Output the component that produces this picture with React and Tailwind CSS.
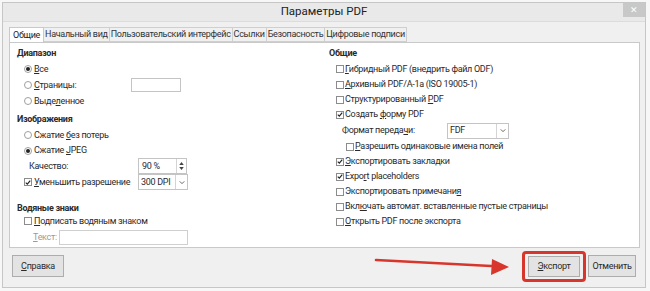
import React from "react";

const Radio = ({ checked }) => (
  <span className="w-[8px] h-[8px] rounded-full border border-[#a0a0a0] bg-white flex items-center justify-center shrink-0">
    {checked && <span className="w-[4px] h-[4px] rounded-full bg-[#222]" />}
  </span>
);

const Check = ({ checked }) => (
  <span className="w-[8px] h-[8px] border border-[#8c8c8c] bg-white flex items-center justify-center shrink-0">
    {checked && (
      <svg viewBox="0 0 8 8" className="w-[7px] h-[7px]">
        <path d="M1 4.2 L3.1 6.3 L7 1.4" stroke="#222" strokeWidth="1.5" fill="none" />
      </svg>
    )}
  </span>
);

const Chevron = () => (
  <svg viewBox="0 0 8 6" className="w-[6px] h-[5px]">
    <path d="M1 1.5 L4 4.5 L7 1.5" stroke="#555" strokeWidth="1.2" fill="none" />
  </svg>
);

const Tab = ({ label, active }) => (
  <div
    className={
      active
        ? "h-[16px] -mb-px px-[3px] flex items-center bg-white border border-b-0 border-[#c9c9c9] text-[#222]"
        : "h-[15px] px-[1px] flex items-center bg-[#f0f0f0] border border-l-0 border-[#cfcfcf] text-[#333]"
    }
  >
    {label}
  </div>
);

export default function App() {
  return (
    <div className="w-[650px] h-[291px] bg-[#f7f7f7] relative overflow-hidden font-['Roboto',sans-serif] text-[9px] tracking-[-0.3px] leading-none text-[#2a2a2a] whitespace-nowrap">
      <div className="ml-[2px] mt-[2px] w-[644px] h-[286px] border border-[#c6c6c6] bg-[#f0f0f0] flex flex-col">
        {/* title bar */}
        <div className="relative h-[19px] bg-[#e9e9e9] border-b border-[#dcdcdc] flex items-center justify-center">
          <span className="text-[11.5px] tracking-normal text-[#222]">Параметры PDF</span>
          <div className="absolute right-0 top-0 w-[22px] h-[14px] bg-[#c8c8c8] flex items-center justify-center text-white text-[9px]">
            ✕
          </div>
        </div>

        {/* tabs */}
        <div className="flex items-end pl-[6px] mt-[4px] h-[16px]">
          <Tab label="Общие" active />
          <Tab label="Начальный вид" />
          <Tab label="Пользовательский интерфейс" />
          <Tab label="Ссылки" />
          <Tab label="Безопасность" />
          <Tab label="Цифровые подписи" />
        </div>

        {/* panel */}
        <div className="ml-[6px] w-[631px] h-[206px] bg-white border border-[#c9c9c9] flex pt-[3px]">
          <div className="w-[319px] pl-[7px] flex flex-col">
            <div className="h-[15px] flex items-center font-bold">Диапазон</div>
            <div className="h-[16px] flex items-center pl-[7px] gap-[2px]">
              <Radio checked />
              <span><u>В</u>се</span>
            </div>
            <div className="h-[16px] flex items-center pl-[7px]">
              <div className="w-[107px] flex items-center gap-[2px]">
                <Radio />
                <span><u>С</u>траницы:</span>
              </div>
              <div className="w-[50px] h-[14px] border border-[#c4c4c4] bg-white" />
            </div>
            <div className="h-[16px] flex items-center pl-[7px] gap-[2px]">
              <Radio />
              <span>Выде<u>л</u>енное</span>
            </div>
            <div className="h-[18px] pt-[2px] flex items-center font-bold">Изображения</div>
            <div className="h-[16px] flex items-center pl-[7px] gap-[2px]">
              <Radio />
              <span>Сжатие <u>б</u>ез потерь</span>
            </div>
            <div className="h-[15px] flex items-center pl-[7px] gap-[2px]">
              <Radio checked />
              <span>Сжатие <u>J</u>PEG</span>
            </div>
            <div className="h-[16px] flex items-center pl-[12px]">
              <span className="w-[109px]">Качество:</span>
              <div className="w-[49px] h-[16px] border border-[#c4c4c4] bg-white flex items-center">
                <span className="flex-1 pl-[3px]">90 %</span>
                <div className="w-[10px] h-full border-l border-[#d4d4d4] flex flex-col items-center justify-center gap-[2px]">
                  <svg viewBox="0 0 6 4" className="w-[5px] h-[3px]"><path d="M0 4 L3 0 L6 4 Z" fill="#444" /></svg>
                  <svg viewBox="0 0 6 4" className="w-[5px] h-[3px]"><path d="M0 0 L3 4 L6 0 Z" fill="#444" /></svg>
                </div>
              </div>
            </div>
            <div className="h-[16px] flex items-center pl-[7px]">
              <div className="w-[114px] flex items-center gap-[2px]">
                <Check checked />
                <span><u>У</u>меньшить разрешение</span>
              </div>
              <div className="w-[50px] h-[16px] border border-[#c4c4c4] bg-white flex items-center">
                <span className="flex-1 pl-[2px]">300 DPI</span>
                <div className="w-[12px] h-full border-l border-[#d4d4d4] flex items-center justify-center">
                  <Chevron />
                </div>
              </div>
            </div>
            <div className="h-[24px] pb-[1px] flex items-end font-bold">Водяные знаки</div>
            <div className="h-[14px] flex items-center pl-[7px] gap-[2px]">
              <Check />
              <span><u>П</u>одписать водяным знаком</span>
            </div>
            <div className="h-[18px] flex items-center pl-[16px]">
              <span className="w-[26px] text-[#9a9a9a]"><u>Т</u>екст:</span>
              <div className="w-[129px] h-[15px] border border-[#cfcfcf] bg-white" />
            </div>
          </div>

          <div className="flex-1 flex flex-col">
            <div className="h-[15px] flex items-center font-bold">Общие</div>
            <div className="h-[16px] flex items-center pl-[7px] gap-[1px]">
              <Check />
              <span><u>Г</u>ибридный PDF (внедрить файл ODF)</span>
            </div>
            <div className="h-[15px] flex items-center pl-[7px] gap-[1px]">
              <Check />
              <span><u>А</u>рхивный PDF/A-1a (ISO 19005-1)</span>
            </div>
            <div className="h-[15px] flex items-center pl-[7px] gap-[1px]">
              <Check />
              <span>Структурированный <u>P</u>DF</span>
            </div>
            <div className="h-[15px] flex items-center pl-[7px] gap-[1px]">
              <Check checked />
              <span>Создать <u>ф</u>орму PDF</span>
            </div>
            <div className="h-[17px] flex items-center pl-[13px]">
              <span className="w-[105px]">Формат переда<u>ч</u>и:</span>
              <div className="w-[62px] h-[16px] border border-[#c4c4c4] bg-white flex items-center">
                <span className="flex-1 pl-[2px]">FDF</span>
                <div className="w-[12px] h-full border-l border-[#d4d4d4] flex items-center justify-center">
                  <Chevron />
                </div>
              </div>
            </div>
            <div className="h-[15px] flex items-center pl-[17px] gap-[1px]">
              <Check />
              <span><u>Р</u>азрешить одинаковые имена полей</span>
            </div>
            <div className="h-[15px] flex items-center pl-[7px] gap-[1px]">
              <Check checked />
              <span><u>Э</u>кспортировать закладки</span>
            </div>
            <div className="h-[15px] flex items-center pl-[7px] gap-[1px]">
              <Check checked />
              <span>Expo<u>r</u>t placeholders</span>
            </div>
            <div className="h-[15px] flex items-center pl-[7px] gap-[1px]">
              <Check />
              <span>Экспортировать примечани<u>я</u></span>
            </div>
            <div className="h-[15px] flex items-center pl-[7px] gap-[1px]">
              <Check />
              <span>Вкл<u>ю</u>чать автомат. вставленные пустые страницы</span>
            </div>
            <div className="h-[15px] flex items-center pl-[7px] gap-[1px]">
              <Check />
              <span><u>О</u>ткрыть PDF после экспорта</span>
            </div>
          </div>
        </div>

        {/* buttons */}
        <div className="flex-1 flex items-center px-[9px] pb-[3px]">
          <button className="w-[52px] h-[22px] border border-[#adadad] bg-[#e3e3e3] flex items-center justify-center">
            <span><u>С</u>правка</span>
          </button>
          <div className="flex-1" />
          <div className="border-[3px] border-[#d8362d] rounded-[4px] px-[3px] py-[2px]">
            <button className="w-[52px] h-[21px] border border-[#adadad] bg-[#e3e3e3] flex items-center justify-center">
              <span><u>Э</u>кспорт</span>
            </button>
          </div>
          <button className="ml-[2px] w-[48px] h-[22px] border border-[#adadad] bg-[#e3e3e3] flex items-center justify-center">
            Отменить
          </button>
        </div>
      </div>

      {/* annotation arrow */}
      <svg className="absolute left-0 top-0 pointer-events-none" width="650" height="291">
        <line x1="376" y1="260" x2="496" y2="266.2" stroke="#d8362d" strokeWidth="2.6" strokeLinecap="round" />
        <polygon points="509,267 492,259 491,275" fill="#d8362d" />
      </svg>
    </div>
  );
}
